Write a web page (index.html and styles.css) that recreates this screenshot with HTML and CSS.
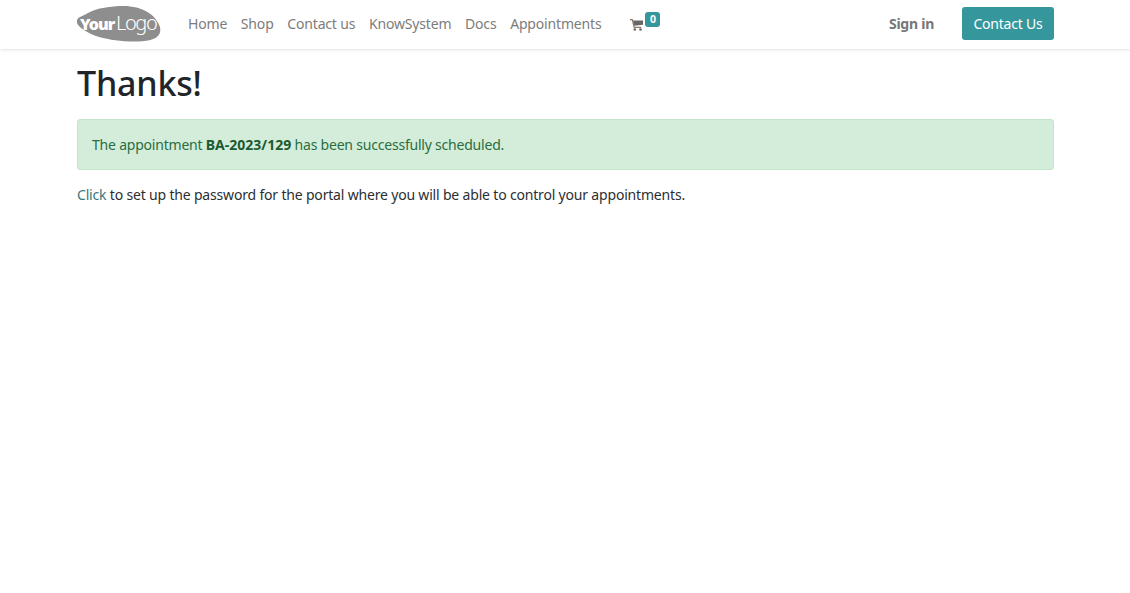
FILE: index.html
```html
<!DOCTYPE html>
<html lang="en">
<head>
<meta charset="utf-8">
<title>Thanks!</title>
<link rel="stylesheet" href="styles.css">
</head>
<body>
<header class="navbar">
  <div class="container nav-inner">
    <a class="logo" href="#">
      <svg width="85" height="36" viewBox="0 0 85 36">
        <path class="logo-blob" d="M0 14C1 11 6 10 11 7C20 2 34 0 46 0C66 0 79 9 83 21C85 30 78 35 62 35.500C46 36 34 34 22 31C12 28 2 22 0 17Z"/>
        <text class="logo-your" x="3" y="24">Your</text>
        <text class="logo-logo" x="39" y="24">Logo</text>
      </svg>
    </a>
    <nav class="nav-links">
      <a href="#">Home</a>
      <a href="#">Shop</a>
      <a href="#">Contact us</a>
      <a href="#">KnowSystem</a>
      <a href="#">Docs</a>
      <a href="#">Appointments</a>
    </nav>
    <a class="cart" href="#">
      <svg width="13" height="12" viewBox="0 0 13 12">
        <path class="cart-handle" d="M0 .7h2.300l1.900 7.600h7"/>
        <path class="cart-body" d="M3 1.500h10v4.300l-8.700 1z"/>
        <circle class="cart-body" cx="4.800" cy="10.500" r="1.300"/>
        <circle class="cart-body" cx="10.500" cy="10.500" r="1.300"/>
      </svg>
      <span class="badge">0</span>
    </a>
    <a class="signin" href="#">Sign in</a>
    <a class="cta" href="#">Contact Us</a>
  </div>
</header>
<main class="container">
  <h1 class="title">Thanks!</h1>
  <div class="alert">The appointment <strong>BA-2023/129</strong> has been successfully scheduled.</div>
  <p class="note"><a href="#">Click</a> to set up the password for the portal where you will be able to control your appointments.</p>
</main>
</body>
</html>
```
FILE: styles.css
```css
* { box-sizing: border-box; }
html, body { margin: 0; padding: 0; background: #fff; }
body {
  font-family: "Noto Sans", "Open Sans", sans-serif;
  font-size: 14px;
  line-height: 21px;
  color: #2b2f33;
}
a { text-decoration: none; }
.container { width: 977px; margin-left: 77px; }
.navbar {
  height: 49px;
  background: #fff;
  box-shadow: 0 1px 3px rgba(0, 0, 0, 0.12);
}
.nav-inner { display: flex; align-items: center; height: 47px; }
.logo { display: block; width: 85px; height: 36px; }
.logo-blob { fill: #8e8e8e; }
.logo-your { fill: #fff; font: 900 16px "Noto Sans", sans-serif; letter-spacing: -1px; }
.logo-logo { fill: #fff; font: 300 20px "Noto Sans", sans-serif; letter-spacing: -1.400px; }
.nav-links { display: flex; gap: 13.700px; margin-left: 26px; }
.nav-links a { color: #7c7c7c; letter-spacing: -0.17px; }
.cart { display: flex; align-items: flex-start; margin-left: 29px; height: 24px; }
.cart svg { margin-top: 7px; }
.cart-handle { fill: none; stroke: #8a7a6c; stroke-width: 1.300; }
.cart-body { fill: #666; }
.badge {
  width: 15px;
  height: 15px;
  margin-left: 2px;
  background: #35979c;
  border-radius: 3px;
  color: #fff;
  font-size: 10.500px;
  font-weight: 700;
  line-height: 15px;
  text-align: center;
}
.signin { margin-left: auto; color: #777; font-weight: 700; letter-spacing: -0.25px; }
.cta {
  margin-left: 28px;
  width: 92px;
  height: 33px;
  background: #35979c;
  border-radius: 3px;
  color: #fff;
  line-height: 33px;
  text-align: center;
  letter-spacing: -0.2px;
}
.title {
  margin: 12px 0 0;
  font-size: 34px;
  font-weight: 500;
  line-height: 44px;
  letter-spacing: -0.2px;
  color: #212529;
}
.alert {
  margin-top: 14px;
  height: 51px;
  padding: 0 14px;
  background: #d4edda;
  border: 1px solid #c3e6cb;
  border-radius: 3px;
  color: #2a6d40;
  line-height: 49px;
  letter-spacing: -0.21px;
}
.alert strong { color: #1c5a30; font-weight: 700; letter-spacing: 0; }
.note { margin: 14px 0 0; letter-spacing: -0.18px; }
.note a { color: #35797c; }
```
